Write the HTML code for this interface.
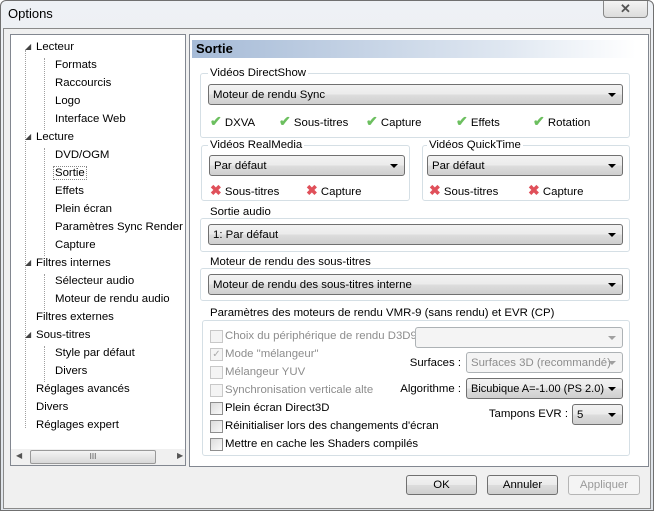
<!DOCTYPE html>
<html><head><meta charset="utf-8"><style>
*{box-sizing:border-box;margin:0;padding:0}
body{width:654px;height:513px;overflow:hidden;background:#fff;font-family:"Liberation Sans",sans-serif;font-size:11.4px;color:#000;position:relative}
.a{position:absolute;white-space:nowrap}
.frame{left:0;top:0;width:654px;height:511px;background:linear-gradient(#eef1f5,#dfe4ea);border:1px solid #707070;border-radius:6px 6px 0 0}
.client{left:3px;top:28px;width:648px;height:481px;background:#f0f0f0;border:1px solid #8a8a8a}
.tree{left:10px;top:34px;width:176px;height:432px;background:#fff;border:1px solid #828790}
.panel{left:189px;top:34px;width:460px;height:433px;background:#fff;border:1px solid #828790}
.grp{position:absolute;border:1px solid #d5dfe5;border-radius:3px}
.lbl{position:absolute;background:#fff;padding:0 2px;color:#000;white-space:nowrap}
.cb{position:absolute;height:21px;border:1px solid #707070;border-radius:3px;background:linear-gradient(#f2f2f2,#ebebeb 50%,#dddddd 51%,#cfcfcf);padding:4px 4px 0;white-space:nowrap;overflow:hidden}
.cb:after{content:"";position:absolute;right:6px;top:8px;border:4px solid transparent;border-top:4px solid #000;border-bottom:0}
.cb.d{border-color:#adb2b5;background:#f4f4f4;color:#8d8d8d}
.cb.d:after{border-top-color:#a0a0a0}
.chk{position:absolute;width:13px;height:13px;border:1px solid #8f8f8f;background:linear-gradient(135deg,#dcdcdc,#fafafa)}
.chk.d{border-color:#c8c8c8;background:#f4f4f4}
.g{color:#8d8d8d}
.btn{position:absolute;height:20px;border:1px solid #707070;border-radius:3px;background:linear-gradient(#f2f2f2,#ebebeb 50%,#dddddd 51%,#cfcfcf);text-align:center;line-height:18px}
.ok{color:#6cbf5f;font-weight:bold;font-size:14px}
.x{color:#e0505a;font-weight:bold;font-size:14px}
.dot{position:absolute;border-left:1px dotted #a0a0a0}
.r{position:absolute;white-space:nowrap;text-align:right}
</style></head><body>
<div class="a frame"></div>
<div class="a" style="left:8px;top:6px;font-size:13px">Options</div>
<div class="a" style="left:603px;top:1px;width:45px;height:17px;border:1px solid #888;border-top:0;border-radius:0 0 4px 4px;background:linear-gradient(#f4f4f4,#dcdcdc);text-align:center;font-size:13px;color:#555;line-height:15px;font-weight:bold">✕</div>
<div class="a client"></div>
<div class="a tree">
<div class="dot" style="left:14px;top:15px;height:378px"></div>
<div class="dot" style="left:33px;top:23px;height:72px"></div>
<div class="dot" style="left:33px;top:113px;height:108px"></div>
<div class="dot" style="left:33px;top:239px;height:36px"></div>
<div class="dot" style="left:33px;top:311px;height:36px"></div>
</div>
<div class="a" style="left:10px;top:35px;width:176px;height:431px;overflow:hidden">
<div class="a" style="left:15px;top:7px;font-size:8px;color:#444">◢</div><div class="a" style="left:26px;top:6px">Lecteur</div>
<div class="a" style="left:45px;top:24px">Formats</div>
<div class="a" style="left:45px;top:42px">Raccourcis</div>
<div class="a" style="left:45px;top:60px">Logo</div>
<div class="a" style="left:45px;top:78px">Interface Web</div>
<div class="a" style="left:15px;top:97px;font-size:8px;color:#444">◢</div><div class="a" style="left:26px;top:96px">Lecture</div>
<div class="a" style="left:45px;top:114px">DVD/OGM</div>
<div class="a" style="left:43px;top:131px;border:1px dotted #888;padding:0 1px">Sortie</div>
<div class="a" style="left:45px;top:150px">Effets</div>
<div class="a" style="left:45px;top:168px">Plein écran</div>
<div class="a" style="left:45px;top:186px">Paramètres Sync Render</div>
<div class="a" style="left:45px;top:204px">Capture</div>
<div class="a" style="left:15px;top:223px;font-size:8px;color:#444">◢</div><div class="a" style="left:26px;top:222px">Filtres internes</div>
<div class="a" style="left:45px;top:240px">Sélecteur audio</div>
<div class="a" style="left:45px;top:258px">Moteur de rendu audio</div>
<div class="a" style="left:26px;top:276px">Filtres externes</div>
<div class="a" style="left:15px;top:295px;font-size:8px;color:#444">◢</div><div class="a" style="left:26px;top:294px">Sous-titres</div>
<div class="a" style="left:45px;top:312px">Style par défaut</div>
<div class="a" style="left:45px;top:330px">Divers</div>
<div class="a" style="left:26px;top:348px">Réglages avancés</div>
<div class="a" style="left:26px;top:366px">Divers</div>
<div class="a" style="left:26px;top:384px">Réglages expert</div>
</div>
<div class="a" style="left:11px;top:449px;width:174px;height:16px;background:#f0f0f0"></div>
<div class="a" style="left:16px;top:451px;font-size:8px;color:#555">◀</div>
<div class="a" style="left:177px;top:451px;font-size:8px;color:#555">▶</div>
<div class="a" style="left:30px;top:450px;width:126px;height:14px;border:1px solid #999;border-radius:2px;background:linear-gradient(#f3f3f3,#d8d8d8);text-align:center;font-size:8px;line-height:12px;color:#555">III</div>
<div class="a panel"></div>
<div class="a" style="left:192px;top:40px;width:444px;height:18px;background:linear-gradient(90deg,#a6bbd7,#dfe7f1 70%,#fff);font-weight:bold;font-size:13px;padding:1px 4px">Sortie</div>

<div class="grp" style="left:200px;top:73px;width:430px;height:65px"></div>
<div class="lbl" style="left:208px;top:67px">Vidéos DirectShow</div>
<div class="cb" style="left:208px;top:84px;width:415px">Moteur de rendu Sync</div>
<div class="a" style="left:210px;top:113px"><span class="ok">✔</span> DXVA</div>
<div class="a" style="left:279px;top:113px"><span class="ok">✔</span> Sous-titres</div>
<div class="a" style="left:366px;top:113px"><span class="ok">✔</span> Capture</div>
<div class="a" style="left:456px;top:113px"><span class="ok">✔</span> Effets</div>
<div class="a" style="left:533px;top:113px"><span class="ok">✔</span> Rotation</div>

<div class="grp" style="left:201px;top:145px;width:209px;height:56px"></div>
<div class="lbl" style="left:208px;top:139px">Vidéos RealMedia</div>
<div class="cb" style="left:209px;top:155px;width:196px">Par défaut</div>
<div class="a" style="left:210px;top:182px"><span class="x">✖</span> Sous-titres</div>
<div class="a" style="left:306px;top:182px"><span class="x">✖</span> Capture</div>

<div class="grp" style="left:422px;top:145px;width:208px;height:56px"></div>
<div class="lbl" style="left:427px;top:139px">Vidéos QuickTime</div>
<div class="cb" style="left:427px;top:155px;width:196px">Par défaut</div>
<div class="a" style="left:429px;top:182px"><span class="x">✖</span> Sous-titres</div>
<div class="a" style="left:528px;top:182px"><span class="x">✖</span> Capture</div>

<div class="grp" style="left:200px;top:218px;width:430px;height:34px"></div>
<div class="lbl" style="left:208px;top:206px">Sortie audio</div>
<div class="cb" style="left:208px;top:224px;width:415px">1: Par défaut</div>

<div class="grp" style="left:200px;top:268px;width:430px;height:33px"></div>
<div class="lbl" style="left:208px;top:256px">Moteur de rendu des sous-titres</div>
<div class="cb" style="left:208px;top:274px;width:415px">Moteur de rendu des sous-titres interne</div>

<div class="grp" style="left:202px;top:320px;width:428px;height:136px"></div>
<div class="lbl" style="left:208px;top:307px">Paramètres des moteurs de rendu VMR-9 (sans rendu) et EVR (CP)</div>
<div class="chk d" style="left:210px;top:330px"></div><div class="a g" style="left:225px;top:330px">Choix du périphérique de rendu D3D9</div>
<div class="chk d" style="left:210px;top:348px;font-size:10px;color:#aaa;line-height:11px;text-align:center">✓</div><div class="a g" style="left:225px;top:348px">Mode "mélangeur"</div>
<div class="chk d" style="left:210px;top:366px"></div><div class="a g" style="left:225px;top:366px">Mélangeur YUV</div>
<div class="chk d" style="left:210px;top:384px"></div><div class="a g" style="left:225px;top:384px;width:148px;overflow:hidden">Synchronisation verticale alteri</div>
<div class="chk" style="left:210px;top:402px"></div><div class="a" style="left:225px;top:402px">Plein écran Direct3D</div>
<div class="chk" style="left:210px;top:420px"></div><div class="a" style="left:225px;top:420px">Réinitialiser lors des changements d'écran</div>
<div class="chk" style="left:210px;top:438px"></div><div class="a" style="left:225px;top:438px">Mettre en cache les Shaders compilés</div>
<div class="cb d" style="left:415px;top:327px;width:208px"></div>
<div class="r" style="right:193px;top:357px">Surfaces :</div>
<div class="cb d" style="left:466px;top:352px;width:157px;padding-right:16px">Surfaces 3D (recommandé)</div>
<div class="r" style="right:193px;top:383px">Algorithme :</div>
<div class="cb" style="left:466px;top:378px;width:157px;padding-right:16px;font-size:11px">Bicubique A=-1.00 (PS 2.0)</div>
<div class="r" style="right:86px;top:408px">Tampons EVR :</div>
<div class="cb" style="left:572px;top:404px;width:51px">5</div>

<div class="btn" style="left:406px;top:475px;width:71px">OK</div>
<div class="btn" style="left:487px;top:475px;width:71px">Annuler</div>
<div class="btn" style="left:568px;top:475px;width:72px;border-color:#b5b5b5;background:#f4f4f4;color:#9a9a9a">Appliquer</div>
</body></html>
